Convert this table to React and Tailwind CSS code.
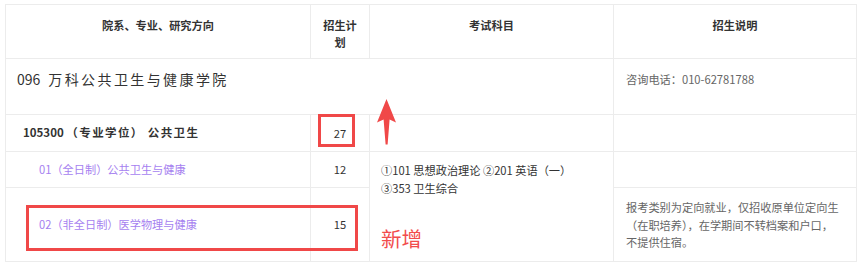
export default function App() {
  return (
    <div className="relative w-[868px] h-[271px] bg-white font-['Noto_Sans_CJK_SC',sans-serif] text-[11.2px] text-[#333]">
      <div className="pt-[4px] pl-[5px]">
        <table className="table-fixed border-collapse w-[851px] border border-[#ececec]">
          <colgroup>
            <col className="w-[305px]" />
            <col className="w-[59px]" />
            <col className="w-[244px]" />
            <col className="w-[243px]" />
          </colgroup>
          <tbody>
            <tr className="h-[54px]">
              <th className="border border-[#ececec] align-top pt-[12px] leading-[17px] font-bold">
                院系、专业、研究方向
              </th>
              <th className="border border-[#ececec] align-top pt-[12px] px-[10px] leading-[17px] font-bold">
                招生计划
              </th>
              <th className="border border-[#ececec] align-top pt-[12px] leading-[17px] font-bold">
                考试科目
              </th>
              <th className="border border-[#ececec] align-top pt-[12px] leading-[17px] font-bold">
                招生说明
              </th>
            </tr>

            <tr className="h-[56px]">
              <td colSpan={3} className="border border-[#ececec] align-top pt-[10px] pl-[11px] leading-[20px] text-[14px]">
                096<span className="ml-[8px] tracking-[2.4px]">万科公共卫生与健康学院</span>
              </td>
              <td className="border border-[#ececec] align-top pt-[10px] pl-[12px] leading-[20px] text-[#666]">
                咨询电话：010-62781788
              </td>
            </tr>

            <tr className="h-[37px]">
              <td className="border border-[#ececec] pl-[17px] font-bold text-[11.5px]">
                105300 <span className="tracking-[1.4px]">（专业学位） 公共卫生</span>
              </td>
              <td className="border border-[#ececec] text-center">27</td>
              <td className="border border-[#ececec]"></td>
              <td className="border border-[#ececec]"></td>
            </tr>

            <tr className="h-[36px]">
              <td className="border border-[#ececec] pl-[33px] text-[#a67ff0]">
                01（全日制）公共卫生与健康
              </td>
              <td className="border border-[#ececec] text-center">12</td>
              <td rowSpan={2} className="border border-[#ececec] align-top pt-[9px] pl-[11px] leading-[18px]">
                ①101 思想政治理论 ②201 英语（一）
                <br />
                ③353 卫生综合
                <div className="mt-[29px] text-[20.5px] leading-[24px] text-[#f24c4c]">新增</div>
              </td>
              <td className="border border-[#ececec]"></td>
            </tr>

            <tr className="h-[74px]">
              <td className="border border-[#ececec] pl-[33px] text-[#a67ff0]">
                02（非全日制）医学物理与健康
              </td>
              <td className="border border-[#ececec] text-center">15</td>
              <td className="border border-[#ececec] pl-[12px] pt-[2px] leading-[17.5px] text-[#666]">
                报考类别为定向就业，仅招收原单位定向生
                <br />
                （在职培养），在学期间不转档案和户口，
                <br />
                不提供住宿。
              </td>
            </tr>
          </tbody>
        </table>
      </div>

      {/* annotation boxes */}
      <div className="absolute left-[318px] top-[114px] w-[37px] h-[33px] border-[3px] border-[#f04848]"></div>
      <div className="absolute left-[26px] top-[205px] w-[332px] h-[46px] border-[3px] border-[#f04848]"></div>

      <svg className="absolute left-[377px] top-[99px]" width="20" height="46" viewBox="0 0 20 46">
        <path d="M9.5 0 L19 23.5 L12.6 20.5 L10.6 45.5 L8.6 45.5 L6.6 20.5 L0 23.5 Z" fill="#f04848" />
      </svg>
    </div>
  );
}
